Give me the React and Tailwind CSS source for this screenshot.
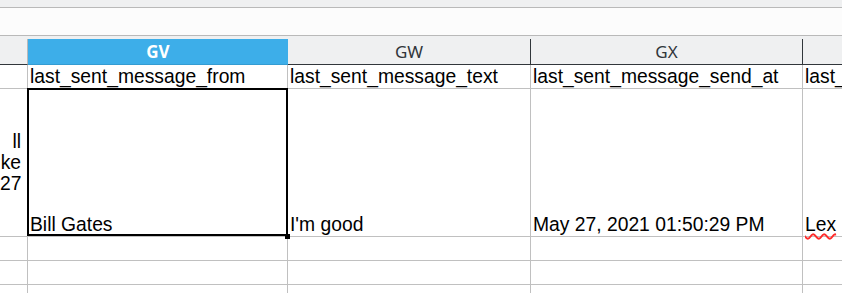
import React from 'react';

const cols = [
  { id: 'GU', w: 'w-[28px]' },
  { id: 'GV', w: 'w-[260px]' },
  { id: 'GW', w: 'w-[243px]' },
  { id: 'GX', w: 'w-[272px]' },
  { id: 'GY', w: 'flex-1' },
];

const cellFont = { fontFamily: '"Liberation Sans", Arial, sans-serif' };

const Cell = ({ w, h, children, clip = true, className = '' }) => (
  <div className={`${w} ${h} shrink-0 border-r border-[#c0c0c0] ${clip ? 'overflow-hidden' : 'overflow-visible'} flex flex-col justify-end pl-[2px] text-[19.3px] leading-[22px] text-black whitespace-nowrap ${className}`} style={cellFont}>
    {children}
  </div>
);

const App = () => {
  return (
    <div className="w-[842px] h-[293px] overflow-hidden bg-white">
      <div className="h-[7px] bg-[#eff0f1]" />
      <div className="h-[29px] border-y border-[#b9b9b9] bg-[#fcfcfc]" />
      <div className="h-[3px] bg-[#eff0f1]" />

      {/* column headers */}
      <div className="flex h-[26px] text-[17px] leading-none" style={{ fontFamily: '"Noto Sans", sans-serif' }}>
        <div className="w-[28px] shrink-0 bg-[#eff0f1] border-r border-[#b9b9b9] border-b border-b-[#31363b]" />
        <div className="w-[260px] shrink-0 bg-[#3daee9] border-b border-[#349cd2] flex items-center justify-center font-bold text-white">GV</div>
        <div className="w-[243px] shrink-0 bg-[#eff0f1] border-r border-b border-[#31363b] flex items-center justify-center text-[#31363b]">GW</div>
        <div className="w-[272px] shrink-0 bg-[#eff0f1] border-r border-b border-[#31363b] flex items-center justify-center text-[#31363b]">GX</div>
        <div className="flex-1 bg-[#eff0f1] border-b border-[#31363b]" />
      </div>

      {/* row 1 */}
      <div className="flex border-b border-[#c0c0c0]">
        <Cell w="w-[28px]" h="h-[23px]" />
        <Cell w="w-[260px]" h="h-[23px]">last_sent_message_from</Cell>
        <Cell w="w-[243px]" h="h-[23px]">last_sent_message_text</Cell>
        <Cell w="w-[272px]" h="h-[23px]">last_sent_message_send_at</Cell>
        <Cell w="flex-1" h="h-[23px]" className="border-r-0">last_</Cell>
      </div>

      {/* row 2 */}
      <div className="flex border-b border-[#c0c0c0]">
        <div className="w-[28px] h-[147px] shrink-0 border-r border-[#c0c0c0] overflow-hidden pt-[42px] pr-[6px] text-right text-[19.3px] leading-[21px]" style={cellFont}>
          <div>ll</div>
          <div>ke</div>
          <div>27</div>
        </div>
        <div className="relative">
          <Cell w="w-[260px]" h="h-[147px]">Bill Gates</Cell>
          <div className="absolute left-[-1px] top-[-1px] w-[261px] h-[148px] border-2 border-black pointer-events-none" />
          <div className="absolute left-[257px] top-[145px] w-[5px] h-[5px] bg-black" />
        </div>
        <Cell w="w-[243px]" h="h-[147px]">I'm good</Cell>
        <Cell w="w-[272px]" h="h-[147px]">May 27, 2021 01:50:29 PM</Cell>
        <Cell w="flex-1" h="h-[147px]" clip={false} className="border-r-0">
          <span className="underline decoration-wavy decoration-[#ff2a2a] decoration-[1.5px] underline-offset-[2px]">Lex</span>
        </Cell>
      </div>

      {[0, 1, 2].map((r) => (
        <div key={r} className="flex border-b border-[#c0c0c0]">
          {cols.map((c, i) => (
            <div key={c.id} className={`${c.w} h-[23px] shrink-0 ${i < 4 ? 'border-r border-[#c0c0c0]' : ''}`} />
          ))}
        </div>
      ))}
    </div>
  );
};

export default App;
